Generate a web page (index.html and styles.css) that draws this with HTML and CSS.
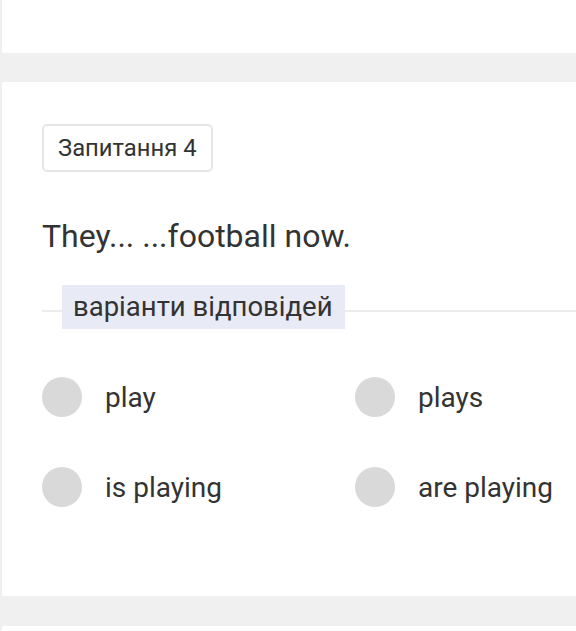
FILE: index.html
```html
<!DOCTYPE html>
<html lang="uk">
<head>
<meta charset="utf-8">
<title>Запитання 4</title>
<link rel="stylesheet" href="styles.css">
</head>
<body>
<div class="card card-top"></div>
<div class="card card-question">
  <div class="badge">Запитання 4</div>
  <div class="question">They... ...football now.</div>
  <div class="divider"><span class="divider-label">варіанти відповідей</span></div>
  <div class="options">
    <div class="option"><span class="radio"></span><span class="option-text">play</span></div>
    <div class="option"><span class="radio"></span><span class="option-text">plays</span></div>
    <div class="option"><span class="radio"></span><span class="option-text">is playing</span></div>
    <div class="option"><span class="radio"></span><span class="option-text">are playing</span></div>
  </div>
</div>
<div class="card card-bottom"></div>
</body>
</html>
```
FILE: styles.css
```css
html, body {
  margin: 0;
  padding: 0;
}
body {
  background: #f0f0f0;
  font-family: Roboto, "Noto Sans", sans-serif;
  color: #333333;
  overflow: hidden;
}
.card {
  background: #ffffff;
  margin-left: 2px;
}
.card-top {
  height: 53px;
}
.card-question {
  margin-top: 29px;
  padding: 42px 0 89px 40px;
}
.card-bottom {
  margin-top: 30px;
  height: 40px;
}
.badge {
  display: inline-block;
  box-sizing: border-box;
  height: 48px;
  width: 171px;
  border: 2px solid #e6e6e6;
  border-radius: 5px;
  font-size: 23.8px;
  line-height: 44px;
  padding: 0 14px;
  color: #333333;
  white-space: nowrap;
}
.question {
  margin-top: 44px;
  font-size: 32px;
  line-height: 40px;
}
.divider {
  margin-top: 29px;
  display: flex;
  align-items: center;
  position: relative;
  height: 44px;
}
.divider::before {
  content: "";
  position: absolute;
  left: 0;
  right: 0;
  top: 50%;
  margin-top: 3px;
  border-top: 2px solid #ececec;
}
.divider-label {
  position: relative;
  margin-left: 20px;
  background: #e8eaf6;
  height: 44px;
  line-height: 44px;
  padding: 0 12px 0 11px;
  font-size: 27.5px;
  white-space: nowrap;
}
.options {
  margin-top: 48px;
  display: grid;
  grid-template-columns: 313px 1fr;
  row-gap: 50px;
}
.option {
  display: flex;
  align-items: center;
  gap: 23px;
  height: 40px;
}
.radio {
  flex: none;
  width: 40px;
  height: 40px;
  border-radius: 50%;
  background: #d9d9d9;
}
.option-text {
  font-size: 28px;
  white-space: nowrap;
}
```
